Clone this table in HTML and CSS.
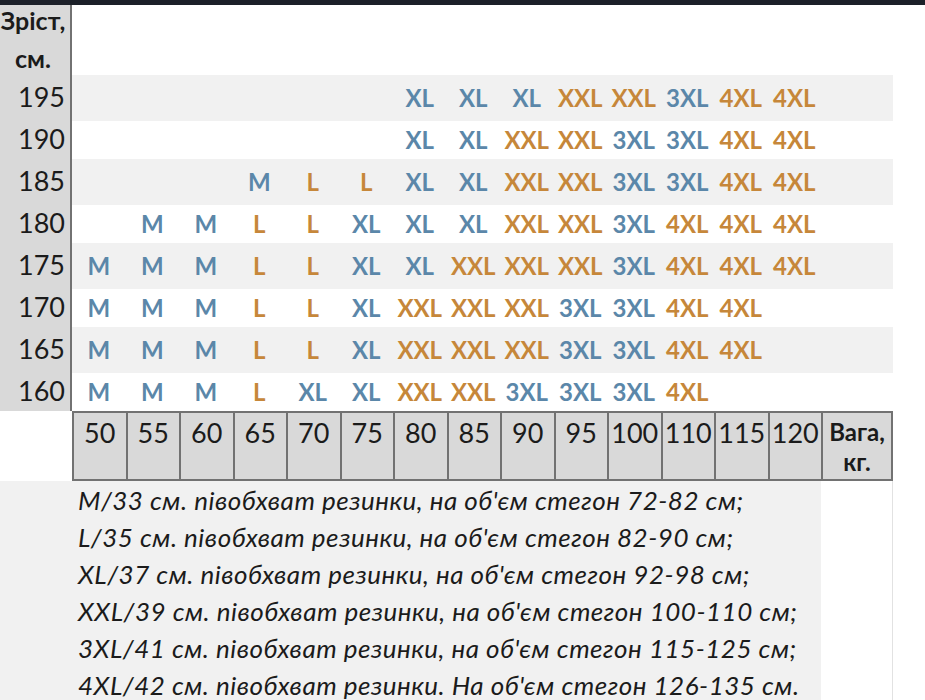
FILE: index.html
```html
<!DOCTYPE html>
<html lang="uk">
<head>
<meta charset="utf-8">
<title>Розмірна сітка</title>
<link rel="stylesheet" href="styles.css">
</head>
<body>
<div class="topbar"></div>
<div class="chart">
  <div class="row head">
    <div class="lab headlab"><span class="headtxt">Зріст,<br>см.</span></div>
    <div class="fill"></div>
  </div>

  <div class="row stripe">
    <div class="lab">195</div>
    <div class="c"></div><div class="c"></div><div class="c"></div><div class="c"></div><div class="c"></div><div class="c"></div>
    <div class="c b">XL</div><div class="c b">XL</div><div class="c b">XL</div><div class="c o">XXL</div><div class="c o">XXL</div><div class="c b">3XL</div><div class="c o">4XL</div><div class="c o">4XL</div>
    <div class="c"></div>
  </div>

  <div class="row">
    <div class="lab">190</div>
    <div class="c"></div><div class="c"></div><div class="c"></div><div class="c"></div><div class="c"></div><div class="c"></div>
    <div class="c b">XL</div><div class="c b">XL</div><div class="c o">XXL</div><div class="c o">XXL</div><div class="c b">3XL</div><div class="c b">3XL</div><div class="c o">4XL</div><div class="c o">4XL</div>
    <div class="c"></div>
  </div>

  <div class="row stripe">
    <div class="lab">185</div>
    <div class="c"></div><div class="c"></div><div class="c"></div>
    <div class="c b">M</div><div class="c o">L</div><div class="c o">L</div>
    <div class="c b">XL</div><div class="c b">XL</div><div class="c o">XXL</div><div class="c o">XXL</div><div class="c b">3XL</div><div class="c b">3XL</div><div class="c o">4XL</div><div class="c o">4XL</div>
    <div class="c"></div>
  </div>

  <div class="row">
    <div class="lab">180</div>
    <div class="c"></div>
    <div class="c b">M</div><div class="c b">M</div><div class="c o">L</div><div class="c o">L</div><div class="c b">XL</div>
    <div class="c b">XL</div><div class="c b">XL</div><div class="c o">XXL</div><div class="c o">XXL</div><div class="c b">3XL</div><div class="c o">4XL</div><div class="c o">4XL</div><div class="c o">4XL</div>
    <div class="c"></div>
  </div>

  <div class="row stripe">
    <div class="lab">175</div>
    <div class="c b">M</div><div class="c b">M</div><div class="c b">M</div><div class="c o">L</div><div class="c o">L</div><div class="c b">XL</div>
    <div class="c b">XL</div><div class="c o">XXL</div><div class="c o">XXL</div><div class="c o">XXL</div><div class="c b">3XL</div><div class="c o">4XL</div><div class="c o">4XL</div><div class="c o">4XL</div>
    <div class="c"></div>
  </div>

  <div class="row">
    <div class="lab">170</div>
    <div class="c b">M</div><div class="c b">M</div><div class="c b">M</div><div class="c o">L</div><div class="c o">L</div><div class="c b">XL</div>
    <div class="c o">XXL</div><div class="c o">XXL</div><div class="c o">XXL</div><div class="c b">3XL</div><div class="c b">3XL</div><div class="c o">4XL</div><div class="c o">4XL</div><div class="c"></div>
    <div class="c"></div>
  </div>

  <div class="row stripe">
    <div class="lab">165</div>
    <div class="c b">M</div><div class="c b">M</div><div class="c b">M</div><div class="c o">L</div><div class="c o">L</div><div class="c b">XL</div>
    <div class="c o">XXL</div><div class="c o">XXL</div><div class="c o">XXL</div><div class="c b">3XL</div><div class="c b">3XL</div><div class="c o">4XL</div><div class="c o">4XL</div><div class="c"></div>
    <div class="c"></div>
  </div>

  <div class="row">
    <div class="lab">160</div>
    <div class="c b">M</div><div class="c b">M</div><div class="c b">M</div><div class="c o">L</div><div class="c b">XL</div><div class="c b">XL</div>
    <div class="c o">XXL</div><div class="c o">XXL</div><div class="c b">3XL</div><div class="c b">3XL</div><div class="c b">3XL</div><div class="c o">4XL</div><div class="c"></div><div class="c"></div>
    <div class="c"></div>
  </div>

  <div class="row axis">
    <div class="blank"></div>
    <div class="ax">50</div><div class="ax">55</div><div class="ax">60</div><div class="ax">65</div><div class="ax">70</div><div class="ax">75</div><div class="ax">80</div><div class="ax">85</div><div class="ax">90</div><div class="ax">95</div><div class="ax">100</div><div class="ax">110</div><div class="ax">115</div><div class="ax">120</div>
    <div class="ax unit">Вага,<br>кг.</div>
  </div>

  <div class="notes">
    <div class="note"><span class="ntext">M/33 см. півобхват резинки, на об'єм стегон 72-82 см;</span><span class="nside"></span></div>
    <div class="note"><span class="ntext">L/35 см. півобхват резинки, на об'єм стегон 82-90 см;</span><span class="nside"></span></div>
    <div class="note"><span class="ntext">XL/37 см. півобхват резинки, на об'єм стегон 92-98 см;</span><span class="nside"></span></div>
    <div class="note"><span class="ntext">XXL/39 см. півобхват резинки, на об'єм стегон 100-110 см;</span><span class="nside"></span></div>
    <div class="note"><span class="ntext">3XL/41 см. півобхват резинки, на об'єм стегон 115-125 см;</span><span class="nside"></span></div>
    <div class="note"><span class="ntext">4XL/42 см. півобхват резинки. На об'єм стегон 126-135 см.</span><span class="nside"></span></div>
  </div>
</div>
</body>
</html>
```

FILE: styles.css
```css
html, body {
  margin: 0;
  padding: 0;
  background: #ffffff;
  overflow: hidden;
}
body {
  width: 925px;
  height: 700px;
  font-family: Lato, "Open Sans", sans-serif;
  color: #1b1b1b;
}
.topbar {
  height: 5px;
  background: #1c2029;
}
.chart {
  width: 893px;
}
.row {
  display: grid;
  grid-template-columns: 72px repeat(14, 1fr) 72px;
  height: 42px;
}
.row.head {
  height: 70px;
  grid-template-columns: 72px 1fr;
}
.lab {
  background: #d9d9d9;
  border-right: 2px solid #727272;
  border-bottom: 2px solid #7a7a7a;
  box-sizing: border-box;
  text-align: right;
  padding-right: 5px;
  font-size: 27px;
  line-height: 44px;
  color: #1b1b1b;
}
.headlab {
  font-weight: 700;
  text-align: center;
  padding-right: 4px;
  line-height: 38px;
  white-space: nowrap;
  font-size: 25px;
  overflow: visible;
}
.headtxt {
  display: block;
  margin-top: -4px;
}
.fill {
  background: #ffffff;
}
.stripe .c {
  background: #f1f1f1;
}
.c {
  text-align: center;
  font-weight: 700;
  font-size: 24px;
  line-height: 46px;
  white-space: nowrap;
}
.c.b {
  color: #5b87a9;
}
.c.o {
  color: #c6873a;
}
.row.axis {
  height: 70px;
}
.blank {
  background: #ffffff;
}
.ax {
  background: #d9d9d9;
  border-top: 2px solid #727272;
  border-bottom: 2px solid #727272;
  border-left: 2px solid #727272;
  box-sizing: border-box;
  text-align: center;
  font-size: 27px;
  line-height: 40px;
  white-space: nowrap;
}
.ax.unit {
  border-right: 2px solid #727272;
  font-weight: 700;
  font-size: 24px;
  line-height: 30px;
  padding-top: 4px;
}
.notes {
  display: flex;
  flex-direction: column;
}
.note {
  display: grid;
  grid-template-columns: 1fr 72px;
  height: 37px;
}
.ntext {
  background: #f1f1f1;
  padding-left: 78px;
  font-style: italic;
  font-size: 26px;
  letter-spacing: 0.5px;
  line-height: 38px;
  white-space: nowrap;
  color: #1b1b1b;
}
.nside {
  background: #ffffff;
  border-bottom: 1px solid #e2e2e2;
  border-right: 1px solid #e2e2e2;
}
```
